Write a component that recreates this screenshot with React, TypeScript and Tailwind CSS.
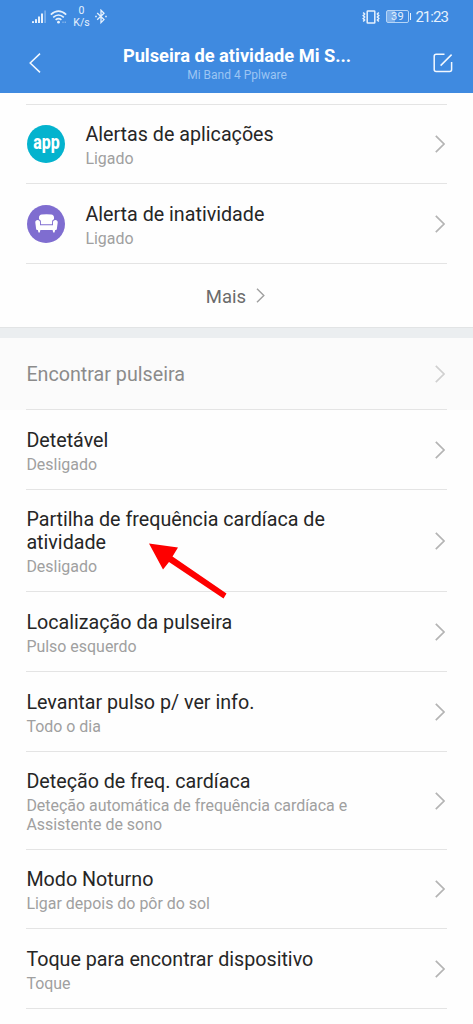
import React from 'react';

interface ChevronProps {
  className?: string;
}

const Chevron: React.FC<ChevronProps> = ({ className = '' }) => (
  <svg className={`shrink-0 ${className}`} viewBox="0 0 10 18" fill="none" stroke="currentColor" strokeWidth="1.7">
    <path d="M0.8 0.8L9 9L0.8 17.2" />
  </svg>
);

interface SettingRowProps {
  title: string;
  subtitle?: string;
  height: string;
  icon?: React.ReactNode;
  disabled?: boolean;
}

const SettingRow: React.FC<SettingRowProps> = ({ title, subtitle, height, icon, disabled }) => {
  return (
    <div className={`pl-[26px] pr-[26px] ${height} ${disabled ? 'bg-[#fbfbfb]' : ''}`}>
      <div className="flex h-full items-center border-b border-[#e4e4e4] pr-[2px]">
        {icon && <div className="mr-[20px] ml-[1px] shrink-0">{icon}</div>}
        <div className={`flex-1 pl-[0.4px] ${disabled ? 'pt-px' : 'pt-[3px]'}`}>
          <div className={`max-w-[325px] text-[19.7px] leading-[23px] ${disabled ? 'text-[#8b8b8b]' : 'text-[#262626]'}`}>
            {title}
          </div>
          {subtitle && (
            <div className="mt-[3px] max-w-[345px] text-[15.95px] leading-[19px] text-[#a0a0a0]">{subtitle}</div>
          )}
        </div>
        <Chevron className={disabled ? 'h-[18px] w-[10px] text-[#d0d0d0]' : 'h-[18px] w-[10px] text-[#b4b4b4]'} />
      </div>
    </div>
  );
};

const AppIcon = () => (
  <div className="flex h-[38px] w-[38px] items-center justify-center rounded-full bg-[#04b3ce]">
    <span className="-mt-[4px] inline-block scale-x-[0.76] text-[21px] leading-[30px] font-extrabold text-white">app</span>
  </div>
);

const SofaIcon = () => (
  <div className="flex h-[38px] w-[38px] items-center justify-center rounded-full bg-[#7f6dd0]">
    <svg width="23" height="19" viewBox="0 0 23 19" fill="#fff">
      <path d="M4 5.2V3.6C4 1.7 5 0.9 6.8 0.6Q11.5 0 16.2 0.6C18 0.9 19 1.7 19 3.6V5.2C17.6 5.6 17.1 6.6 17.1 7.8V10.2H5.9V7.8C5.9 6.6 5.4 5.6 4 5.2Z" />
      <path d="M0.3 8.4C0.3 7 1.2 6.1 2.6 6.1C4.1 6.1 5 7 5 8.4V11.2H18V8.4C18 7 18.9 6.1 20.4 6.1C21.8 6.1 22.7 7 22.7 8.4L21.9 14.8C21.8 15.7 21.3 16.1 20.5 16.1H20.2L19.5 18.5H18.2L17.6 16.1H5.4L4.8 18.5H3.5L2.8 16.1H2.5C1.7 16.1 1.2 15.7 1.1 14.8Z" />
    </svg>
  </div>
);

const StatusBar = () => (
  <div className="flex h-[33px] items-center justify-between pr-[25px] pl-[32px] text-[#e6f1fd]">
    <div className="flex items-center">
      <svg width="15" height="14" viewBox="0 0 15 14" fill="currentColor">
        <rect x="0" y="11.2" width="2" height="1.8" />
        <rect x="3" y="9.2" width="2" height="3.8" />
        <rect x="6" y="6.5" width="2" height="6.5" />
        <rect x="9" y="3.5" width="2" height="9.5" />
        <rect x="12.2" y="0.5" width="1.8" height="12.5" opacity="0.35" />
      </svg>
      <svg className="ml-[3px]" width="17" height="14" viewBox="0 0 17 14" fill="none" stroke="currentColor" strokeWidth="1.6">
        <path d="M0.8 4.6Q8.5 -2.4 16.2 4.6" />
        <path d="M3.2 7.4Q8.5 2.6 13.8 7.4" />
        <path d="M5.6 9.9Q8.5 7.4 11.4 9.9" />
        <circle cx="8.5" cy="12.2" r="1.4" fill="currentColor" stroke="none" />
        <path d="M12.3 12.2h1.4M14.6 12.2h1.4" opacity="0.4" />
      </svg>
      <div className="ml-[6px] w-[17px] text-center text-[10.5px] leading-[11.5px]">
        <div>0</div>
        <div>K/s</div>
      </div>
      <svg className="ml-[5px]" width="12" height="15" viewBox="0 0 12 15" fill="none" stroke="currentColor" strokeWidth="1.3">
        <path d="M2.2 4L9 10.6L6 13.6V1.2L9 4.2L2.2 10.8" />
        <path d="M0.2 7.5h1.6M10.2 7.5h1.6" strokeWidth="1.6" />
      </svg>
    </div>
    <div className="flex items-center">
      <svg width="18" height="14" viewBox="0 0 18 14" fill="none" stroke="currentColor" strokeWidth="1.5">
        <rect x="5.2" y="0.9" width="7.6" height="12.2" rx="0.6" />
        <path d="M1.2 2.4L2.6 4L1.2 5.5L2.6 7L1.2 8.5L2.6 10L1.2 11.6" />
        <path d="M16.8 2.4L15.4 4L16.8 5.5L15.4 7L16.8 8.5L15.4 10L16.8 11.6" />
      </svg>
      <div className="ml-[6px] flex h-[13px] w-[23px] items-center justify-center rounded-[2px] border border-[#b5d5f7] bg-[linear-gradient(90deg,#7db0ec_38%,transparent_38%)] text-[11px] leading-none tracking-[0.3px]">
        39
      </div>
      <div className="ml-[1px] h-[7px] w-[1.5px] bg-[#e6f1fd]" />
      <div className="ml-[4px] text-[15px] leading-[18px] tracking-[-0.95px]">21:23</div>
    </div>
  </div>
);

const Header = () => (
  <header className="h-[93px] bg-[#3f8ae0]">
    <StatusBar />
    <div className="flex h-[60px] items-center justify-between pr-[20px] pl-[29px]">
      <svg width="12" height="20" viewBox="0 0 12 20" fill="none" stroke="#f2f8ff" strokeWidth="1.5">
        <path d="M11 0.6L1.2 10L11 19.4" />
      </svg>
      <div className="pt-[3px] text-center">
        <div className="text-[18.25px] leading-[22px] font-bold text-white">Pulseira de atividade Mi S...</div>
        <div className="text-[12px] leading-[17px] text-[#9cc5f3]">Mi Band 4 Pplware</div>
      </div>
      <svg width="20" height="20" viewBox="0 0 20 20" fill="none" stroke="#f2f8ff" strokeWidth="1.5">
        <path d="M11.5 1.2H3.2Q1.2 1.2 1.2 3.2V16.6Q1.2 18.6 3.2 18.6H16.6Q18.6 18.6 18.6 16.6V9" />
        <path d="M7.6 12.6L18.6 1.6" />
      </svg>
    </div>
  </header>
);

const App: React.FC = () => {
  return (
    <div className="h-[1024px] w-[473px] overflow-hidden bg-[#fefefe] font-['Roboto',sans-serif]">
      <Header />
      <main className="relative">
        <div className="mx-[26px] h-[12px] border-b border-[#e4e4e4]" />
        <SettingRow height="h-[79px]" title="Alertas de aplicações" subtitle="Ligado" icon={<AppIcon />} />
        <SettingRow height="h-[80px]" title="Alerta de inatividade" subtitle="Ligado" icon={<SofaIcon />} />
        <div className="flex h-[63px] items-center justify-center pr-[2px] text-[18.5px] text-[#6b6b6b]">
          <span className="pt-[2px] leading-[22px]">Mais</span>
          <Chevron className="ml-[10px] h-[15px] w-[9px] text-[#a0a0a0]" />
        </div>
        <div className="h-[11px] border-t border-[#e2e4e5] bg-[#ebeef0]" />
        <SettingRow height="h-[72px]" title="Encontrar pulseira" disabled />
        <SettingRow height="h-[80px]" title="Detetável" subtitle="Desligado" />
        <SettingRow height="h-[102px]" title="Partilha de frequência cardíaca de atividade" subtitle="Desligado" />
        <SettingRow height="h-[80px]" title="Localização da pulseira" subtitle="Pulso esquerdo" />
        <SettingRow height="h-[80px]" title="Levantar pulso p/ ver info." subtitle="Todo o dia" />
        <SettingRow
          height="h-[98px]"
          title="Deteção de freq. cardíaca"
          subtitle="Deteção automática de frequência cardíaca e Assistente de sono"
        />
        <SettingRow height="h-[79px]" title="Modo Noturno" subtitle="Ligar depois do pôr do sol" />
        <SettingRow height="h-[80px]" title="Toque para encontrar dispositivo" subtitle="Toque" />

        {/* red pointer over the heart rate sharing row */}
        <svg className="absolute top-[450px] left-[148px]" width="80" height="56" viewBox="0 0 80 56" fill="#fe0000">
          <path d="M1 0.5L30 4.5L24.5 13.5L78.5 50.5L75.5 55.5L21 19L15 26.5Z" />
        </svg>
      </main>
    </div>
  );
};

export default App;
